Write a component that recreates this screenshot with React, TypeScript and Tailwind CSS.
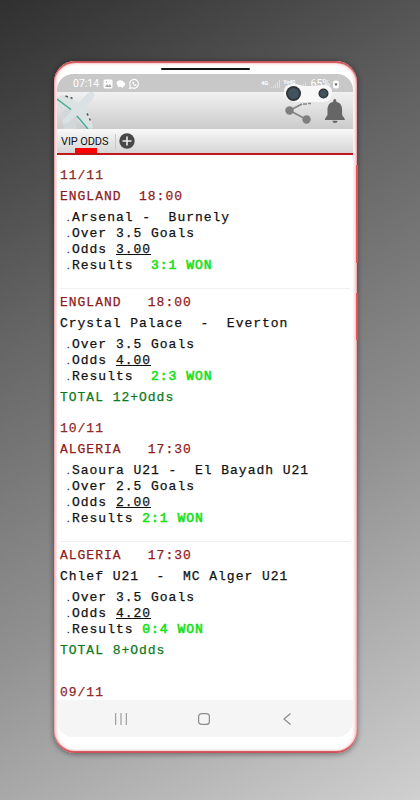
import { ReactNode } from 'react';

interface Match {
  country: string;
  time: string;
  gap: string;
  title?: string;
  details: string[];
  odds: string;
  resultGap: string;
  score: string;
}

interface Day {
  date: string;
  matches: Match[];
  total: string;
}

const days: Day[] = [
  {
    date: '11/11',
    matches: [
      { country: 'ENGLAND', gap: '  ', time: '18:00', details: ['Arsenal -  Burnely', 'Over 3.5 Goals'], odds: '3.00', resultGap: '  ', score: '3:1' },
      { country: 'ENGLAND', gap: '   ', time: '18:00', title: 'Crystal Palace  -  Everton', details: ['Over 3.5 Goals'], odds: '4.00', resultGap: '  ', score: '2:3' },
    ],
    total: 'TOTAL 12+Odds',
  },
  {
    date: '10/11',
    matches: [
      { country: 'ALGERIA', gap: '   ', time: '17:30', details: ['Saoura U21 -  El Bayadh U21', 'Over 2.5 Goals'], odds: '2.00', resultGap: ' ', score: '2:1' },
      { country: 'ALGERIA', gap: '   ', time: '17:30', title: 'Chlef U21  -  MC Alger U21', details: ['Over 3.5 Goals'], odds: '4.20', resultGap: ' ', score: '0:4' },
    ],
    total: 'TOTAL 8+Odds',
  },
];

const Row = ({ children, className = '' }: { children: ReactNode; className?: string }) => (
  <p className={`h-[21px] leading-[21px] ${className}`}>{children}</p>
);

const Detail = ({ children }: { children: ReactNode }) => (
  <li className="flex h-4 leading-4">
    <span className="w-[5px] shrink-0 font-[Roboto,sans-serif] text-[10px] leading-4 tracking-normal">.</span>
    <span>{children}</span>
  </li>
);

const MatchBlock = ({ match }: { match: Match }) => (
  <section>
    <Row className="text-[#8f1a1a]">{match.country + match.gap + match.time}</Row>
    {match.title && <Row>{match.title}</Row>}
    <ul className="pb-[1.5px] pl-[7px] pt-[3.5px]">
      {match.details.map((detail) => (
        <Detail key={detail}>{detail}</Detail>
      ))}
      <Detail>
        Odds <span className="underline underline-offset-1">{match.odds}</span>
      </Detail>
      <Detail>
        {'Results' + match.resultGap}
        <span className="text-[#16e016] [-webkit-text-stroke:0.6px_#16e016]">{match.score} WON</span>
      </Detail>
    </ul>
  </section>
);

const StatusBar = () => (
  <div className="relative flex h-[18px] shrink-0 items-center bg-[#c8c8c8] pl-4 pt-[2px] text-white">
    <span className="font-[Roboto,sans-serif] text-[10.5px] leading-none">07:14</span>
    <svg className="ml-[4px]" width="37" height="12" viewBox="0 0 37 12">
      <rect x="0.5" y="1.5" width="9" height="9" rx="1.500" fill="#fff" />
      <path d="M2 9l2-3 1.500 1.800L7 6l1.500 3z" fill="#aaa" />
      <circle cx="3.500" cy="4" r="0.800" fill="#aaa" />
      <path d="M13.500 5.300c0-1.900 1.700-3 3.600-3 2 0 3.300.8 3.600 2 1 .4 1.500 1.100 1.500 2 0 1-.6 1.800-1.600 2.200l-1.400 2-.6-1.600-2.200-.2-1.400.7.1-1.400c-1-.6-1.600-1.500-1.600-2.700z" fill="#fff" />
      <path d="M26.500 10.500l.8-2.400a4.400 4.400 0 1 1 1.700 1.600z" fill="none" stroke="#fff" strokeWidth="1.100" />
      <path d="M29.300 4.200c0 2 1.800 3.700 3.700 3.700l.8-1-1.300-.7-.6.500-1.200-1.200.5-.7-.6-1.200z" fill="#fff" />
    </svg>
    {/* network, battery and front cameras overlap in the corner */}
    <div className="ml-auto mr-[14px] flex items-center gap-[3px] font-[Roboto,sans-serif] leading-none">
      <span className="-mt-[3px] text-[6px] font-bold">4G</span>
      <svg width="9" height="8" viewBox="0 0 9 8">
        <path d="M0 8V7h1v1zM2 8V5.500h1V8zM4 8V4h1v4zM6 8V2h1v6zM8 8V0h1v8z" fill="#e0e0e0" />
      </svg>
      <span className="-mt-[3px] text-[5px] font-bold">Yo4G</span>
      <svg width="9" height="8" viewBox="0 0 9 8">
        <path d="M0 8V7h1v1zM2 8V5.500h1V8zM4 8V4h1v4zM6 8V2h1v6z" fill="#e0e0e0" />
      </svg>
      <span className="text-[10.5px]">65%</span>
      <svg width="6" height="9" viewBox="0 0 6 9">
        <rect y="0.500" width="6" height="8" rx="2.500" fill="#fff" />
        <path d="M1.500 3.500h3L3 6z" fill="#444" />
      </svg>
    </div>
    <svg className="absolute left-[227px] top-[9px] z-10" width="52" height="21" viewBox="0 0 52 21">
      <path d="M0 9C0 3 4 1 9 1c6 0 8 2 12 2h10c4 0 5-1 9-1 6 0 8 3 8 7 0 7-3 10-10 10H14C5 19 0 15 0 9z" fill="#f8f8f8" />
      <circle cx="9.500" cy="10.500" r="7.500" fill="#2f3539" />
      <circle cx="9.500" cy="10.500" r="5.500" fill="#42535e" />
      <circle cx="39.500" cy="10.500" r="5" fill="#2f3539" />
      <circle cx="39.500" cy="10.500" r="3.600" fill="#42535e" />
    </svg>
  </div>
);

const Header = () => (
  <header className="flex h-[37px] shrink-0 items-start justify-between bg-gradient-to-b from-[#f1f1f1] to-[#cbcbcb]">
    <svg width="38" height="37" viewBox="0 0 38 37">
      <path d="M0 5L7 3 17 8 33 22 36 36 30 37 16 25 0 13z" fill="#dce1e2" />
      <path d="M4 20l9-5 8 9-2 13H7z" fill="#d2d8da" />
      <path d="M5 29L30 2c3-3 8-3 7 2l-3 6L13 29c-3 3-8 4-8 0z" fill="#dae2e5" />
      <path d="M0 7l14 10.500M20 24l11 13" stroke="#45ae96" strokeWidth="1.500" fill="none" />
      <path d="M8.500 4l2.500 1M13.500 5.500l2 1M30 21.500l1.200 2M32.500 26.500l.7 2" stroke="#505658" strokeWidth="1.500" fill="none" />
    </svg>
    <div className="flex pr-2 pt-[7px]">
      <svg width="40" height="26" viewBox="0 0 40 26">
        <path d="M17 5L4.500 11.500 21.500 20.500M18 5h4M23 4.500h3" stroke="#858585" strokeWidth="1.700" fill="none" />
        <circle cx="4.500" cy="11.500" r="4.200" fill="#7f7f7f" />
        <circle cx="21.500" cy="20.500" r="4.200" fill="#7f7f7f" />
      </svg>
      <svg width="20" height="25" viewBox="0 0 20 25">
        <path d="M8.300 1.500a1.500 1.500 0 0 1 3 0v1.200c4 .8 5.800 4 5.800 8v5.300l2.700 4v1H-.2v-1l2.700-4v-5.300c0-4 1.800-7.200 5.800-8z" fill="#666" />
        <path d="M7.500 21.800h5c0 1.500-1 2.200-2.500 2.200s-2.500-.7-2.500-2.200z" fill="#666" />
      </svg>
    </div>
  </header>
);

const Tabs = () => (
  <div className="relative flex h-[26px] shrink-0 items-center border-b-2 border-[#c01818] bg-gradient-to-b from-[#f9f9f9] to-[#d5d5d5] pl-1">
    <span className="w-[54px] whitespace-nowrap font-[Roboto,sans-serif] text-[11px] leading-none tracking-[-0.1px] text-[#111]">VIP ODDS</span>
    <span className="h-[15px] w-px bg-[#c8c8c8]" />
    <svg className="ml-[3px]" width="16" height="16" viewBox="0 0 16 16">
      <circle cx="8" cy="8" r="7.700" fill="#484848" />
      <path d="M8 3.500v9M3.500 8h9" stroke="#eee" strokeWidth="1.600" />
    </svg>
    <span className="absolute bottom-0 left-[18px] h-[5px] w-[22px] bg-[#f00]" />
  </div>
);

const NavBar = () => (
  <nav className="flex h-[37px] shrink-0 items-center bg-[#f5f5f5] pl-[58px]">
    <svg width="12" height="12" viewBox="0 0 12 12">
      <path d="M.7 0v12M6 0v12M11.300 0v12" stroke="#8c8c8c" strokeWidth="1" />
    </svg>
    <svg className="ml-[71px]" width="12" height="12" viewBox="0 0 12 12">
      <rect x="0.600" y="0.600" width="10.800" height="10.800" rx="3" fill="none" stroke="#8c8c8c" strokeWidth="1.200" />
    </svg>
    <svg className="ml-[73px]" width="8" height="12" viewBox="0 0 8 12">
      <path d="M7.500.5L1 6l6.500 5.500" fill="none" stroke="#8c8c8c" strokeWidth="1.200" />
    </svg>
  </nav>
);

const App = () => {
  return (
    <div className="flex h-[800px] w-[420px] overflow-hidden bg-[linear-gradient(151deg,#303030_0%,#636363_32%,#919191_64%,#d0d0d0_100%)]">
      <div className="relative ml-[54px] mt-[61px] flex h-[692px] w-[303px] flex-col rounded-[21px] bg-white px-[3px] pt-[13px] shadow-[0_1px_5px_1px_rgba(0,0,0,0.35),inset_0_2px_1px_#cc5358,inset_0_-2px_1px_#cc5358,inset_0_0_4px_1px_#f0989b]">
        <span className="absolute left-[107px] top-[7px] h-[2px] w-[89px] rounded bg-[#151515]" />
        <span className="absolute -right-[1px] top-[104px] h-[98px] w-[2px] bg-[#ea5054]" />
        <span className="absolute -right-[1px] top-[232px] h-[47px] w-[2px] bg-[#ea5054]" />
        <div className="flex h-[663px] w-[296px] flex-col overflow-hidden rounded-[16px] bg-white">
          <StatusBar />
          <Header />
          <Tabs />
          <main className="min-h-0 flex-1 overflow-hidden whitespace-pre pl-[3px] pt-[9.5px] font-['Liberation_Mono',monospace] text-[13px] tracking-[0.98px] text-[#111] [-webkit-text-stroke:0.25px]">
            {days.map((day, i) => (
              <div key={day.date} className={i > 0 ? 'mt-[10px]' : ''}>
                <Row className="text-[#8f2a2a]">{day.date}</Row>
                <MatchBlock match={day.matches[0]} />
                <hr className="mb-[2.5px] mr-[3px] mt-[12.5px] border-[#efefef]" />
                <MatchBlock match={day.matches[1]} />
                <Row className="text-[#0c7a1c]">{day.total}</Row>
              </div>
            ))}
            <Row className="mt-[21px] text-[#8f2a2a]">09/11</Row>
          </main>
          <NavBar />
        </div>
      </div>
    </div>
  );
};

export default App;
